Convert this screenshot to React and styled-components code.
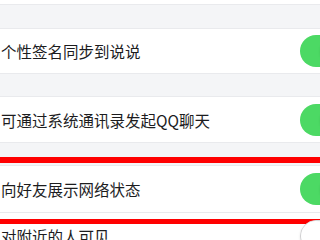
import React from "react";
import styled, { createGlobalStyle } from "styled-components";

const Global = createGlobalStyle`
  html, body {
    margin: 0;
    padding: 0;
    background: #f4f5f7;
    overflow: hidden;
  }
  body {
    font-family: "Noto Sans CJK SC", "Noto Sans", sans-serif;
    width: 320px;
    height: 240px;
  }
`;

const Page = styled.div`
  width: 320px;
  height: 240px;
  overflow: hidden;
`;

const TopStrip = styled.div`
  height: 4px;
  background: #ffffff;
  border-bottom: 1px solid #e9eaed;
`;

const Gap = styled.div`
  height: ${(p) => p.h}px;
`;

const Section = styled.div`
  background: #ffffff;
  border-top: 1px solid #e9eaed;
  border-bottom: 1px solid #e9eaed;
`;

const Row = styled.div`
  position: relative;
  height: ${(p) => p.h || 46}px;
  display: flex;
  align-items: center;
  padding-left: 1px;
  border-top: ${(p) => (p.sep ? "1px solid #e9eaed" : "none")};
`;

const Label = styled.span`
  font-size: 15.5px;
  color: #1c1c1e;
  letter-spacing: 0;
  white-space: nowrap;
`;

const Toggle = styled.span`
  margin-left: auto;
  margin-right: -32px;
  flex-shrink: 0;
  position: relative;
  width: 52px;
  height: 32px;
  box-sizing: border-box;
  border-radius: 16px;
  background: ${(p) => (p.on ? "#4cd964" : "#ffffff")};
  border: ${(p) => (p.on ? "none" : "1.5px solid #e2e2e4")};
`;

const Knob = styled.span`
  position: absolute;
  top: ${(p) => (p.on ? 1 : 0)}px;
  ${(p) => (p.on ? "right: 1px;" : "left: 0;")}
  width: 30px;
  height: 30px;
  border-radius: 50%;
  background: #ffffff;
  box-shadow: 0 1px 3px rgba(0, 0, 0, 0.25);
`;

const Highlight = styled.div`
  position: absolute;
  left: -4px;
  right: -4px;
  top: -9px;
  bottom: -12px;
  border-top: 6px solid #ff0000;
  border-bottom: 5px solid #ff0000;
  pointer-events: none;
`;

const SettingRow = ({ label, on, h, sep, highlight }) => (
  <Row h={h} sep={sep}>
    <Label>{label}</Label>
    <Toggle on={on}>
      <Knob on={on} />
    </Toggle>
    {highlight && <Highlight />}
  </Row>
);

export default function App() {
  return (
    <Page>
      <Global />
      <TopStrip />
      <Gap h={23} />
      <Section>
        <SettingRow label="个性签名同步到说说" on h={44} />
      </Section>
      <Gap h={22} />
      <Section>
        <SettingRow label="可通过系统通讯录发起QQ聊天" on h={45} />
      </Section>
      <Gap h={22} />
      <Section>
        <SettingRow label="向好友展示网络状态" on h={46} highlight />
        <SettingRow label="对附近的人可见" on={false} h={46} sep />
      </Section>
    </Page>
  );
}
